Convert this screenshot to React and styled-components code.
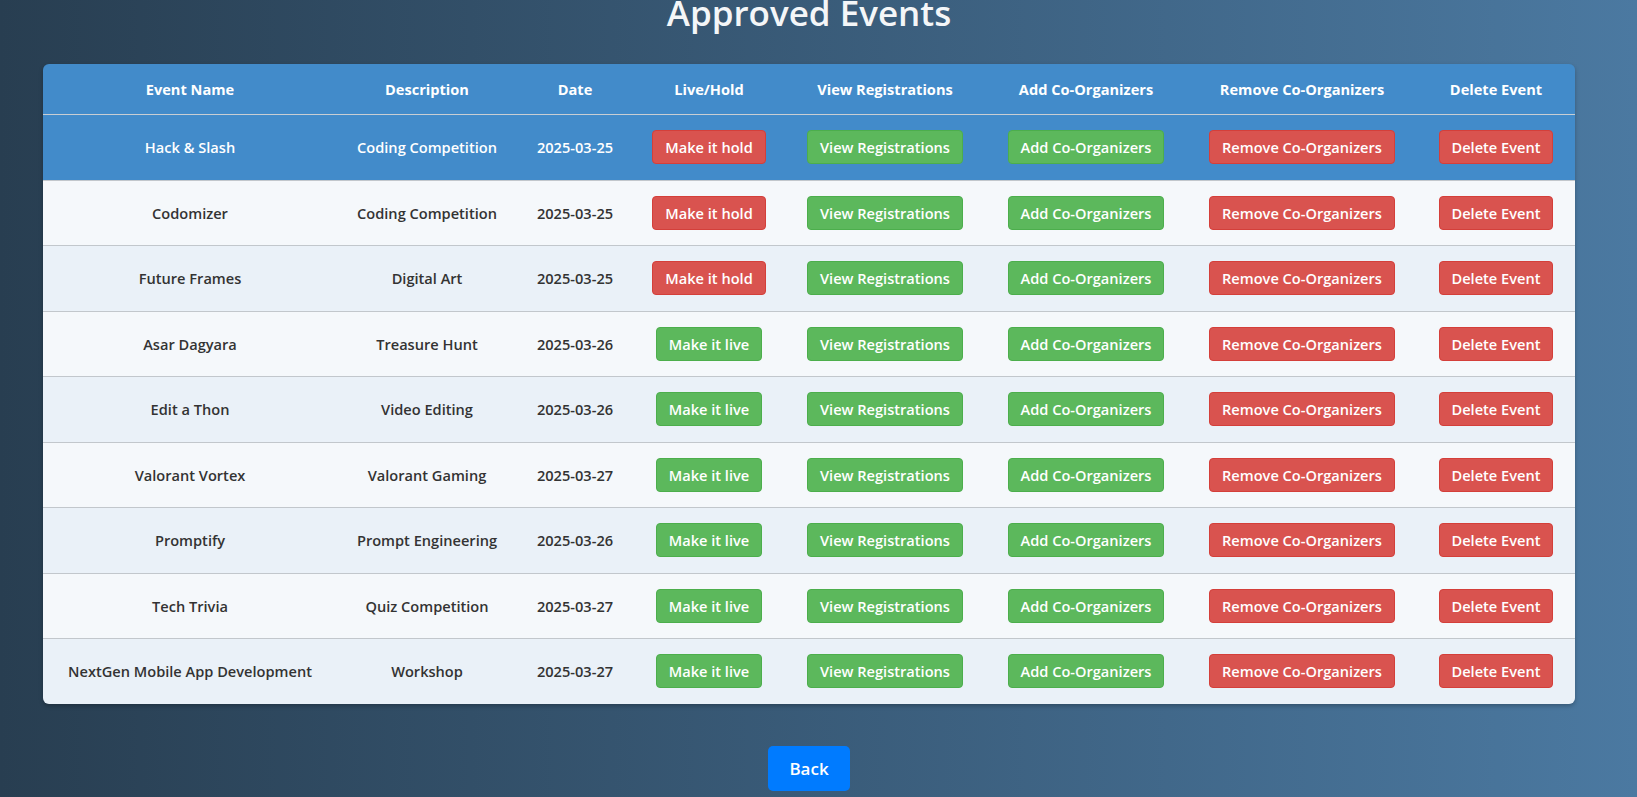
import styled, { createGlobalStyle } from "styled-components";

const GlobalStyle = createGlobalStyle`
  html, body {
    margin: 0;
    padding: 0;
  }
  body {
    min-height: 100vh;
    overflow: hidden;
    font-family: "Open Sans", "Noto Sans", sans-serif;
    background: linear-gradient(to right, #283e51, #4b79a1);
    background-attachment: fixed;
  }
`;

const Page = styled.div`
  padding: 0 19px 0 0;
  display: flex;
  flex-direction: column;
  align-items: center;
`;

const Title = styled.h1`
  margin: -7px 0 31px;
  font-size: 35px;
  line-height: 40px;
  font-weight: 600;
  color: #f4f6f8;
`;

const TableWrap = styled.div`
  width: 1532px;
  border-radius: 6px;
  overflow: hidden;
  box-shadow: 0 2px 4px rgba(0, 0, 0, 0.25);
`;

const Table = styled.table`
  width: 100%;
  border-collapse: collapse;
  table-layout: fixed;
`;

const Col = styled.col`
  width: ${({ $w }) => $w}px;
`;

const HeadCell = styled.th`
  padding: 15px 8px 15px;
  background: #428bca;
  color: #fff;
  font-size: 14.6px;
  line-height: 20px;
  font-weight: 700;
  text-align: center;
  border-bottom: 1px solid #c9ced3;
`;

const Row = styled.tr`
  background: ${({ $active, $alt }) =>
    $active ? "#428bca" : $alt ? "#eaf1f8" : "#f5f8fb"};
  color: ${({ $active }) => ($active ? "#fff" : "#333")};
  border-bottom: 1px solid #c2c7cc;

  &:last-child {
    border-bottom: none;
  }
`;

const Cell = styled.td`
  padding: 15px 8px 15.5px;
  font-size: 14.6px;
  line-height: 20px;
  font-weight: 600;
  text-align: center;
`;

const ActionButton = styled.button`
  height: 34px;
  padding: 0 12px;
  border-radius: 4px;
  border: 1px solid ${({ $tone }) => ($tone === "green" ? "#4cae4c" : "#d43f3a")};
  background: ${({ $tone }) => ($tone === "green" ? "#5cb85c" : "#d9534f")};
  color: #fff;
  font-family: inherit;
  font-size: 14.6px;
  font-weight: 600;
  cursor: pointer;
`;

const BackButton = styled.button`
  margin-top: 42px;
  height: 45px;
  padding: 0 21px;
  border: none;
  border-radius: 5px;
  background: #007bff;
  color: #fff;
  font-family: inherit;
  font-size: 17px;
  font-weight: 600;
  cursor: pointer;
`;

const columns = [
  { label: "Event Name", w: 294 },
  { label: "Description", w: 180 },
  { label: "Date", w: 116 },
  { label: "Live/Hold", w: 152 },
  { label: "View Registrations", w: 200 },
  { label: "Add Co-Organizers", w: 202 },
  { label: "Remove Co-Organizers", w: 230 },
  { label: "Delete Event", w: 158 },
];

const events = [
  { name: "Hack & Slash", desc: "Coding Competition", date: "2025-03-25", live: true },
  { name: "Codomizer", desc: "Coding Competition", date: "2025-03-25", live: true },
  { name: "Future Frames", desc: "Digital Art", date: "2025-03-25", live: true },
  { name: "Asar Dagyara", desc: "Treasure Hunt", date: "2025-03-26", live: false },
  { name: "Edit a Thon", desc: "Video Editing", date: "2025-03-26", live: false },
  { name: "Valorant Vortex", desc: "Valorant Gaming", date: "2025-03-27", live: false },
  { name: "Promptify", desc: "Prompt Engineering", date: "2025-03-26", live: false },
  { name: "Tech Trivia", desc: "Quiz Competition", date: "2025-03-27", live: false },
  { name: "NextGen Mobile App Development", desc: "Workshop", date: "2025-03-27", live: false },
];

const App = () => {
  return (
    <>
      <GlobalStyle />
      <Page>
        <Title>Approved Events</Title>

        {/* Events table */}
        <TableWrap>
          <Table>
            <colgroup>
              {columns.map((c) => (
                <Col key={c.label} $w={c.w} />
              ))}
            </colgroup>
            <thead>
              <tr>
                {columns.map((c) => (
                  <HeadCell key={c.label}>{c.label}</HeadCell>
                ))}
              </tr>
            </thead>
            <tbody>
              {events.map((ev, i) => (
                <Row key={ev.name} $active={i === 0} $alt={i % 2 === 0}>
                  <Cell>{ev.name}</Cell>
                  <Cell>{ev.desc}</Cell>
                  <Cell>{ev.date}</Cell>
                  <Cell>
                    {ev.live ? (
                      <ActionButton $tone="red">Make it hold</ActionButton>
                    ) : (
                      <ActionButton $tone="green">Make it live</ActionButton>
                    )}
                  </Cell>
                  <Cell>
                    <ActionButton $tone="green">View Registrations</ActionButton>
                  </Cell>
                  <Cell>
                    <ActionButton $tone="green">Add Co-Organizers</ActionButton>
                  </Cell>
                  <Cell>
                    <ActionButton $tone="red">Remove Co-Organizers</ActionButton>
                  </Cell>
                  <Cell>
                    <ActionButton $tone="red">Delete Event</ActionButton>
                  </Cell>
                </Row>
              ))}
            </tbody>
          </Table>
        </TableWrap>

        <BackButton>Back</BackButton>
      </Page>
    </>
  );
};

export default App;
